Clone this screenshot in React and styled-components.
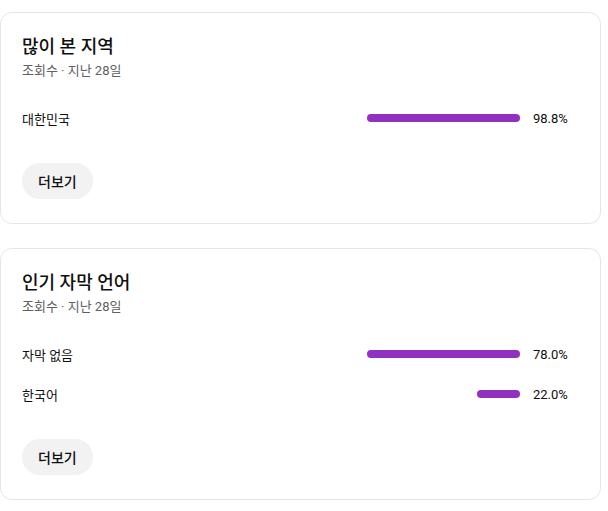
import React from "react"
import styled, { createGlobalStyle } from "styled-components"

const GlobalStyle = createGlobalStyle`
  html, body {
    margin: 0;
    padding: 0;
    background: #ffffff;
  }
  body {
    font-family: Roboto, "Noto Sans CJK KR", sans-serif;
    color: #0f0f0f;
  }
`

const Page = styled.div`
  display: flex;
  flex-direction: column;
  gap: 24px;
  padding-top: 12px;
  width: 601px;
`

const Card = styled.section`
  display: flex;
  flex-direction: column;
  border: 1px solid #e5e5e5;
  border-radius: 12px;
  padding: 22px 22px 24px 21px;
  background: #fff;
`

const Title = styled.h2`
  margin: 0;
  font-size: 18px;
  line-height: 24px;
  font-weight: 500;
`

const Subtitle = styled.div`
  margin-top: 3px;
  font-size: 13px;
  line-height: 18px;
  color: #606060;
`

const Rows = styled.div`
  display: flex;
  flex-direction: column;
  margin-top: 18px;
`

const Row = styled.div`
  display: flex;
  align-items: center;
  height: 40px;
  font-size: 13px;
`

const Label = styled.div`
  flex: 1;
`

const Track = styled.div`
  display: flex;
  justify-content: flex-end;
  width: 153px;
`

const Bar = styled.div`
  height: 8px;
  border-radius: 4px;
  background: #9131c1;
`

const Percent = styled.div`
  width: 45px;
  margin-left: 13px;
`

const MoreButton = styled.button`
  align-self: flex-start;
  margin-top: 25px;
  height: 36px;
  padding: 0 16px;
  border: none;
  border-radius: 18px;
  background: #f2f2f2;
  font-family: inherit;
  font-size: 14px;
  font-weight: 500;
  color: #0f0f0f;
`

const cards = [
  {
    title: "많이 본 지역",
    rows: [{ name: "대한민국", value: 98.8 }],
  },
  {
    title: "인기 자막 언어",
    rows: [
      { name: "자막 없음", value: 78.0 },
      { name: "한국어", value: 22.0 },
    ],
  },
]

const StatCard = ({ title, rows }) => {
  const max = Math.max(...rows.map(r => r.value))
  return (
    <Card>
      <Title>{title}</Title>
      <Subtitle>조회수 · 지난 28일</Subtitle>
      <Rows>
        {rows.map(row => (
          <Row key={row.name}>
            <Label>{row.name}</Label>
            <Track>
              <Bar style={{ width: `${(row.value / max) * 100}%` }} />
            </Track>
            <Percent>{row.value.toFixed(1)}%</Percent>
          </Row>
        ))}
      </Rows>
      <MoreButton>더보기</MoreButton>
    </Card>
  )
}

export default function App() {
  return (
    <>
      <GlobalStyle />
      <Page>
        {cards.map(card => (
          <StatCard key={card.title} title={card.title} rows={card.rows} />
        ))}
      </Page>
    </>
  )
}
